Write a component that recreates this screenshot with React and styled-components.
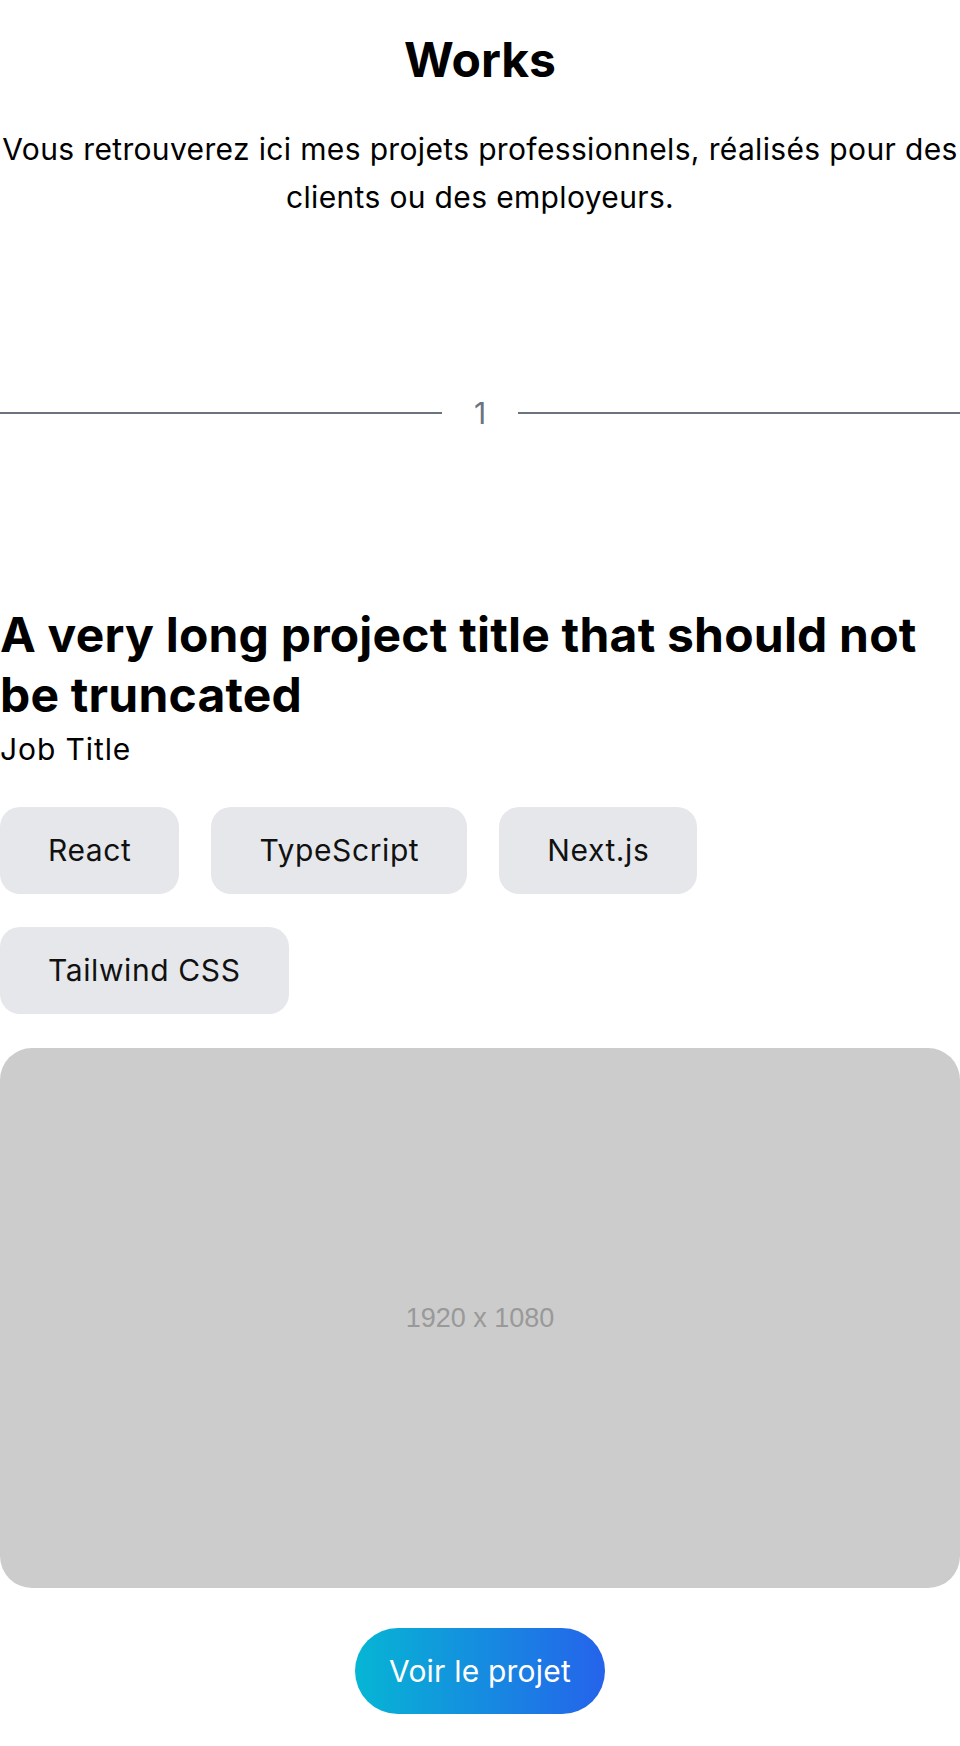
import styled, { createGlobalStyle } from 'styled-components';

const GlobalStyle = createGlobalStyle`
  * {
    box-sizing: border-box;
  }
  body {
    margin: 0;
    background: #ffffff;
    font-family: 'Inter', 'Noto Sans', sans-serif;
    color: #000000;
  }
`;

const tags = ['React', 'TypeScript', 'Next.js', 'Tailwind CSS'];

export default function App() {
  return (
    <>
      <GlobalStyle />
      <Page>
        <Header>
          <Title>Works</Title>
          <Intro>
            Vous retrouverez ici mes projets professionnels, réalisés pour des
            clients ou des employeurs.
          </Intro>
        </Header>

        <Divider>
          <Line />
          <Index>1</Index>
          <Line />
        </Divider>

        <Project>
          <ProjectTitle>A very long project title that should not be truncated</ProjectTitle>
          <JobTitle>Job Title</JobTitle>
          <TagList>
            {tags.map((tag) => (
              <Tag key={tag}>{tag}</Tag>
            ))}
          </TagList>
          <Placeholder>1920 x 1080</Placeholder>
          <ButtonRow>
            <ProjectButton>Voir le projet</ProjectButton>
          </ButtonRow>
        </Project>
      </Page>
    </>
  );
}

const Page = styled.main`
  width: 960px;
  padding: 36px 0 33px;
  display: flex;
  flex-direction: column;
`;

const Header = styled.header`
  display: flex;
  flex-direction: column;
  align-items: center;
  text-align: center;
`;

const Title = styled.h1`
  margin: 0;
  font-size: 48px;
  line-height: 48px;
  font-weight: 700;
`;

const Intro = styled.p`
  margin: 41px 0 0;
  font-size: 30px;
  line-height: 48px;
  font-weight: 400;
  letter-spacing: 0.35px;
`;

const Divider = styled.div`
  margin-top: 168px;
  display: flex;
  align-items: center;
  gap: 32px;
`;

const Line = styled.div`
  flex: 1;
  height: 2px;
  background: #6b7280;
`;

const Index = styled.span`
  font-size: 30px;
  line-height: 48px;
  color: #6b7280;
`;

const Project = styled.section`
  margin-top: 168px;
  display: flex;
  flex-direction: column;
`;

const ProjectTitle = styled.h2`
  margin: 0;
  font-size: 48px;
  line-height: 60px;
  font-weight: 700;
  letter-spacing: 0.2px;
`;

const JobTitle = styled.p`
  margin: 2px 0 0;
  font-size: 30px;
  line-height: 45px;
  letter-spacing: 0.9px;
`;

const TagList = styled.ul`
  list-style: none;
  margin: 35px 0 0;
  padding: 0;
  display: flex;
  flex-wrap: wrap;
  gap: 33px 32px;
`;

const Tag = styled.li`
  padding: 24px 48px;
  font-size: 30px;
  line-height: 39px;
  letter-spacing: 0.6px;
  background: #e5e7eb;
  border-radius: 20px;
  color: #111111;
`;

const Placeholder = styled.div`
  margin-top: 34px;
  width: 100%;
  aspect-ratio: 16 / 9;
  border-radius: 32px;
  background: #cccccc;
  color: #999999;
  font-family: 'Liberation Sans', Arial, sans-serif;
  font-size: 27px;
  display: flex;
  align-items: center;
  justify-content: center;
`;

const ButtonRow = styled.div`
  margin-top: 40px;
  display: flex;
  justify-content: center;
`;

const ProjectButton = styled.button`
  border: none;
  cursor: pointer;
  padding: 19px 34px;
  border-radius: 999px;
  background: linear-gradient(to right, #06b6d4, #2563eb);
  color: #ffffff;
  font-family: 'Inter', 'Noto Sans', sans-serif;
  font-size: 30px;
  line-height: 48px;
  font-weight: 400;
  letter-spacing: 0.2px;
`;
